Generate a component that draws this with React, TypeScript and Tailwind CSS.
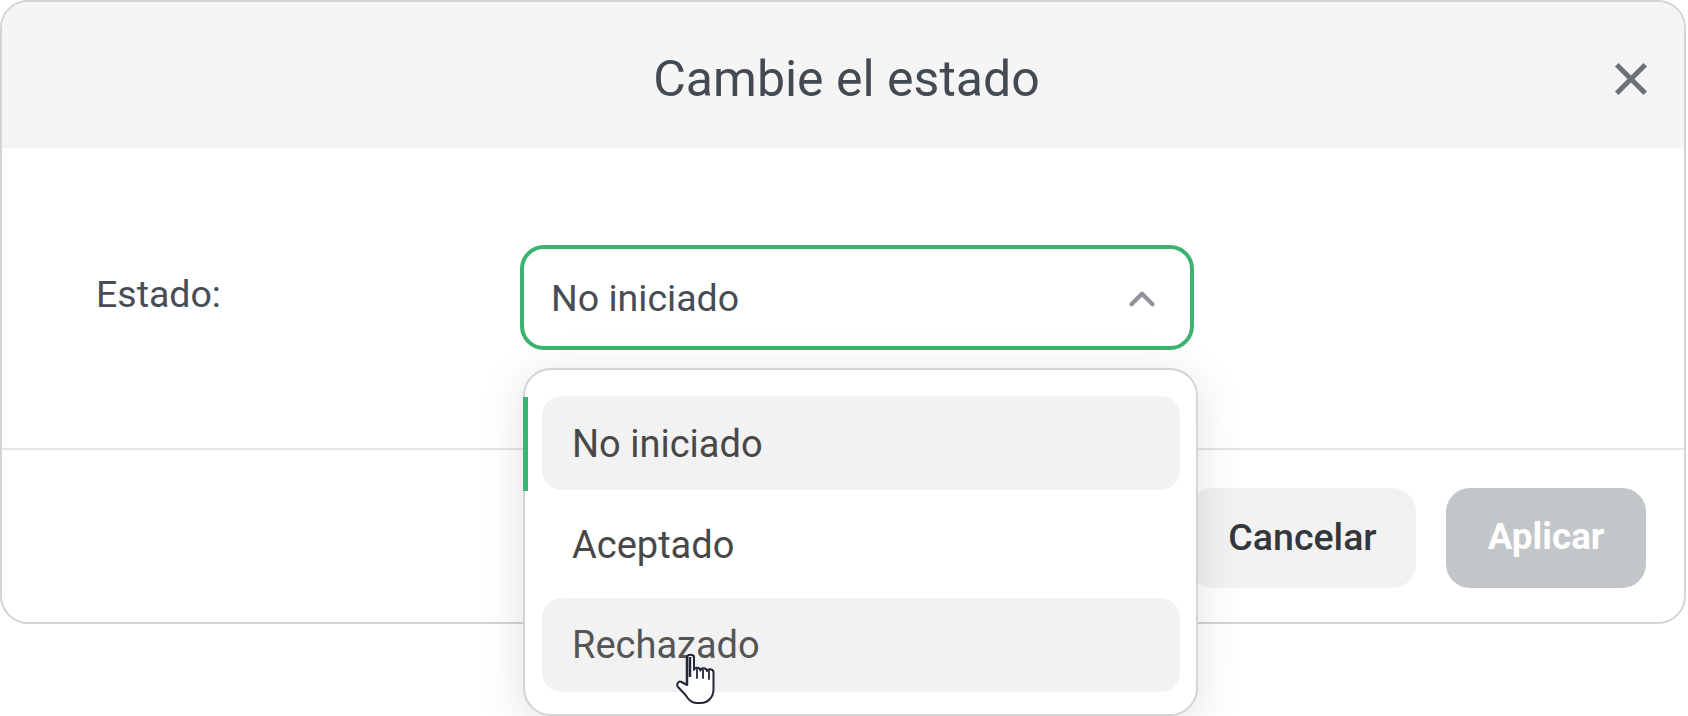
import { ChevronUp, X } from 'lucide-react';

function HandCursor() {
  return (
    <svg className="absolute left-[676px] top-[653px]" width="39" height="51" viewBox="0 0 39 51" fill="none">
      <path
        d="M11 32V5c0-4.500 7-4.500 7 0v12c0-3 6-3 6.500 .5c0-3 6-3 6.500 .5c0-2.500 6.500-2.500 6.500 1.500V36c0 8-5 14-13 14h-4c-5 0-8-3-11-8L2 34c-2-3 .5-6.500 3.500-5z"
        fill="#fff"
        stroke="#23263b"
        strokeWidth="2"
        strokeLinejoin="round"
      />
      <path d="M11 4v28M14 4v20" stroke="#23263b" strokeWidth="2.500" />
      <path d="M21 16v9M27 17v8M33 18v8" stroke="#23263b" strokeWidth="1.800" strokeLinecap="round" />
    </svg>
  );
}

export default function App() {
  return (
    <div className="relative w-[1688px] h-[716px] overflow-hidden bg-white font-['Roboto',sans-serif]">
      <div className="w-[1686px] h-[624px] border-2 border-[#d4d4d4] rounded-[28px] overflow-hidden bg-white flex flex-col">
        <div className="relative h-[146px] shrink-0 bg-[#f5f5f5] flex items-center justify-center">
          <h2 className="text-[50px] text-[#444a52] pt-[8px] pl-[7px]">Cambie el estado</h2>
          <X className="absolute right-[28px] top-[52px] w-[50px] h-[50px] text-[#6b7178]" strokeWidth={2.400} strokeLinecap="square" />
        </div>
        <div className="h-[302px] shrink-0 border-b-2 border-[#e5e5e5] pt-[97px] pl-[94px] flex items-start">
          <span className="w-[424px] h-[105px] flex items-center pb-[6px] text-[37.500px] text-[#484d55]">Estado:</span>
          <div className="w-[674px] h-[105px] border-4 border-[#3cb371] rounded-[24px] flex items-center justify-between pl-[27px] pr-[27px] pt-[2px]">
            <span className="text-[37.500px] text-[#484d55]">No iniciado</span>
            <ChevronUp className="w-[42px] h-[42px] text-[#90939a]" strokeWidth={2.400} />
          </div>
        </div>
        <div className="flex-1 flex items-start justify-end pt-[38px] pr-[38px] gap-[30px]">
          <button className="w-[227px] h-[100px] rounded-[24px] bg-[#f2f2f2] text-[37.500px] font-medium text-[#33363b] pb-[2px]">Cancelar</button>
          <button className="w-[200px] h-[100px] rounded-[24px] bg-[#c3c6c8] text-[36.800px] font-bold text-white pb-[2px]">Aplicar</button>
        </div>
      </div>

      <div className="absolute left-[523px] top-[368px] w-[675px] h-[348px] bg-white border-2 border-[#d4d4d4] rounded-[28px] shadow-[0_8px_48px_rgba(0,0,0,0.12)] pl-[17px] pr-[16px] pt-[26px] flex flex-col gap-[7px]">
        <div className="absolute left-[-2px] top-[27px] w-[5px] h-[94px] bg-[#3cb371]" />
        <div className="h-[94px] shrink-0 rounded-[20px] bg-[#f2f2f2] flex items-center px-[30px] pt-[2px] text-[38px] text-[#484848]">No iniciado</div>
        <div className="h-[94px] shrink-0 rounded-[20px] flex items-center px-[30px] pt-[2px] text-[38px] text-[#484848]">Aceptado</div>
        <div className="h-[94px] shrink-0 rounded-[20px] bg-[#f2f2f2] flex items-center px-[30px] text-[38px] text-[#555555]">Rechazado</div>
      </div>

      <HandCursor />
    </div>
  );
}
